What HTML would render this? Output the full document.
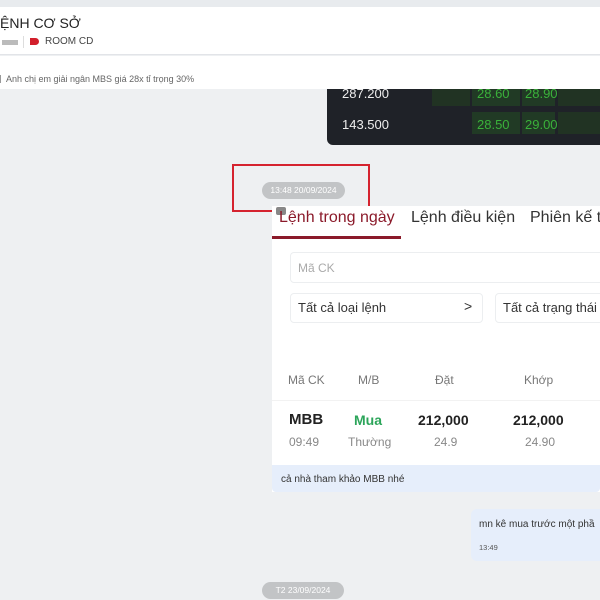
<!DOCTYPE html>
<html><head><meta charset="utf-8"><style>
*{margin:0;padding:0;box-sizing:border-box}
body{width:600px;height:600px;overflow:hidden;background:#eef0f2;font-family:"Liberation Sans","DejaVu Sans",sans-serif;position:relative}
.a{position:absolute;white-space:nowrap}
</style></head><body>
<div class="a" style="left:0;top:0;width:600px;height:7px;background:#e8ebee"></div>
<div class="a" style="left:0;top:7px;width:600px;height:48px;background:#fff;border-bottom:1px solid #e2e4e8"></div>
<div class="a" style="left:0;top:15px;font-size:14px;color:#222">ỆNH CƠ SỞ</div>
<div class="a" style="left:2px;top:40px;width:16px;height:5px;background:#bbb"></div>
<div class="a" style="left:23px;top:36px;width:1px;height:12px;background:#ddd"></div>
<div class="a" style="left:30px;top:38px;width:9px;height:7px;background:#d21f2b;border-radius:0 4px 4px 0"></div>
<div class="a" style="left:45px;top:36px;font-size:10px;color:#444">ROOM CD</div>
<div class="a" style="left:0;top:56px;width:600px;height:33px;background:#fff"></div>
<div class="a" style="left:0;top:75px;width:1px;height:8px;background:#999"></div>
<div class="a" style="left:6px;top:74px;font-size:9px;color:#666">Anh chị em giải ngân MBS giá 28x  tỉ trọng 30%</div>
<div class="a" style="left:327px;top:89px;width:273px;height:56px;background:#1f2228;border-radius:0 0 0 6px"></div>
<div class="a" style="left:432px;top:89px;width:38px;height:17px;background:#213323"></div>
<div class="a" style="left:472px;top:89px;width:48px;height:17px;background:#213a25"></div>
<div class="a" style="left:522px;top:89px;width:33px;height:17px;background:#213a25"></div>
<div class="a" style="left:558px;top:89px;width:42px;height:17px;background:#213323"></div>
<div class="a" style="left:472px;top:112px;width:48px;height:22px;background:#213a25"></div>
<div class="a" style="left:522px;top:112px;width:33px;height:22px;background:#213a25"></div>
<div class="a" style="left:558px;top:112px;width:42px;height:22px;background:#213323"></div>
<div class="a" style="left:342px;top:86px;font-size:13px;color:#eee">287.200</div>
<div class="a" style="left:477px;top:86px;font-size:13px;color:#3ab13a">28.60</div>
<div class="a" style="left:525px;top:86px;font-size:13px;color:#3ab13a">28.90</div>
<div class="a" style="left:342px;top:117px;font-size:13px;color:#eee">143.500</div>
<div class="a" style="left:477px;top:117px;font-size:13px;color:#3ab13a">28.50</div>
<div class="a" style="left:525px;top:117px;font-size:13px;color:#3ab13a">29.00</div>
<div class="a" style="left:262px;top:182px;width:83px;height:17px;background:#c2c4c6;border-radius:9px;color:#fff;font-size:8.5px;text-align:center;line-height:17px">13:48 20/09/2024</div>
<div class="a" style="left:232px;top:164px;width:138px;height:48px;border:2px solid #d5232f"></div>
<div class="a" style="left:272px;top:206px;width:328px;height:286px;background:#fff"></div>
<div class="a" style="left:276px;top:207px;width:10px;height:8px;background:#888;border-radius:2px"></div>
<div class="a" style="left:279px;top:209px;font-size:16px;color:#8b1a2a">Lệnh trong ngày</div>
<div class="a" style="left:411px;top:209px;font-size:16px;color:#333">Lệnh điều kiện</div>
<div class="a" style="left:530px;top:209px;font-size:16px;color:#333">Phiên kế ti</div>
<div class="a" style="left:272px;top:236px;width:129px;height:3px;background:#8b1a2a"></div>
<div class="a" style="left:290px;top:252px;width:320px;height:31px;border:1px solid #eceef0;border-radius:4px"></div>
<div class="a" style="left:298px;top:261px;font-size:12px;color:#aaa">Mã CK</div>
<div class="a" style="left:290px;top:293px;width:193px;height:30px;border:1px solid #eceef0;border-radius:4px"></div>
<div class="a" style="left:298px;top:300px;font-size:13px;color:#333">Tất cả loại lệnh</div>
<div class="a" style="left:464px;top:298px;font-size:14px;color:#333">&gt;</div>
<div class="a" style="left:495px;top:293px;width:120px;height:30px;border:1px solid #eceef0;border-radius:4px"></div>
<div class="a" style="left:503px;top:300px;font-size:13px;color:#333">Tất cả trạng thái</div>
<div class="a" style="left:288px;top:373px;font-size:12px;color:#777">Mã CK</div>
<div class="a" style="left:358px;top:373px;font-size:12px;color:#777">M/B</div>
<div class="a" style="left:435px;top:373px;font-size:12px;color:#777">Đặt</div>
<div class="a" style="left:524px;top:373px;font-size:12px;color:#777">Khớp</div>
<div class="a" style="left:272px;top:400px;width:328px;height:1px;background:#f2f2f2"></div>
<div class="a" style="left:289px;top:411px;font-size:15px;font-weight:bold;color:#222">MBB</div>
<div class="a" style="left:354px;top:412px;font-size:14px;font-weight:bold;color:#2ca55a">Mua</div>
<div class="a" style="left:418px;top:412px;font-size:14px;font-weight:bold;color:#222">212,000</div>
<div class="a" style="left:513px;top:412px;font-size:14px;font-weight:bold;color:#222">212,000</div>
<div class="a" style="left:289px;top:435px;font-size:12px;color:#888">09:49</div>
<div class="a" style="left:348px;top:435px;font-size:12px;color:#888">Thường</div>
<div class="a" style="left:434px;top:435px;font-size:12px;color:#888">24.9</div>
<div class="a" style="left:525px;top:435px;font-size:12px;color:#888">24.90</div>
<div class="a" style="left:272px;top:465px;width:328px;height:27px;background:#e6eefb;border-radius:0 0 4px 4px"></div>
<div class="a" style="left:281px;top:474px;font-size:10px;color:#333">cả nhà tham khảo MBB nhé</div>
<div class="a" style="left:471px;top:509px;width:140px;height:52px;background:#e6eefb;border-radius:6px"></div>
<div class="a" style="left:479px;top:519px;font-size:10px;color:#333">mn kê mua trước một phầ</div>
<div class="a" style="left:479px;top:543px;font-size:7.5px;color:#555">13:49</div>
<div class="a" style="left:262px;top:582px;width:82px;height:17px;background:#c2c4c6;border-radius:9px;color:#fff;font-size:8.5px;text-align:center;line-height:17px">T2 23/09/2024</div>
</body></html>
